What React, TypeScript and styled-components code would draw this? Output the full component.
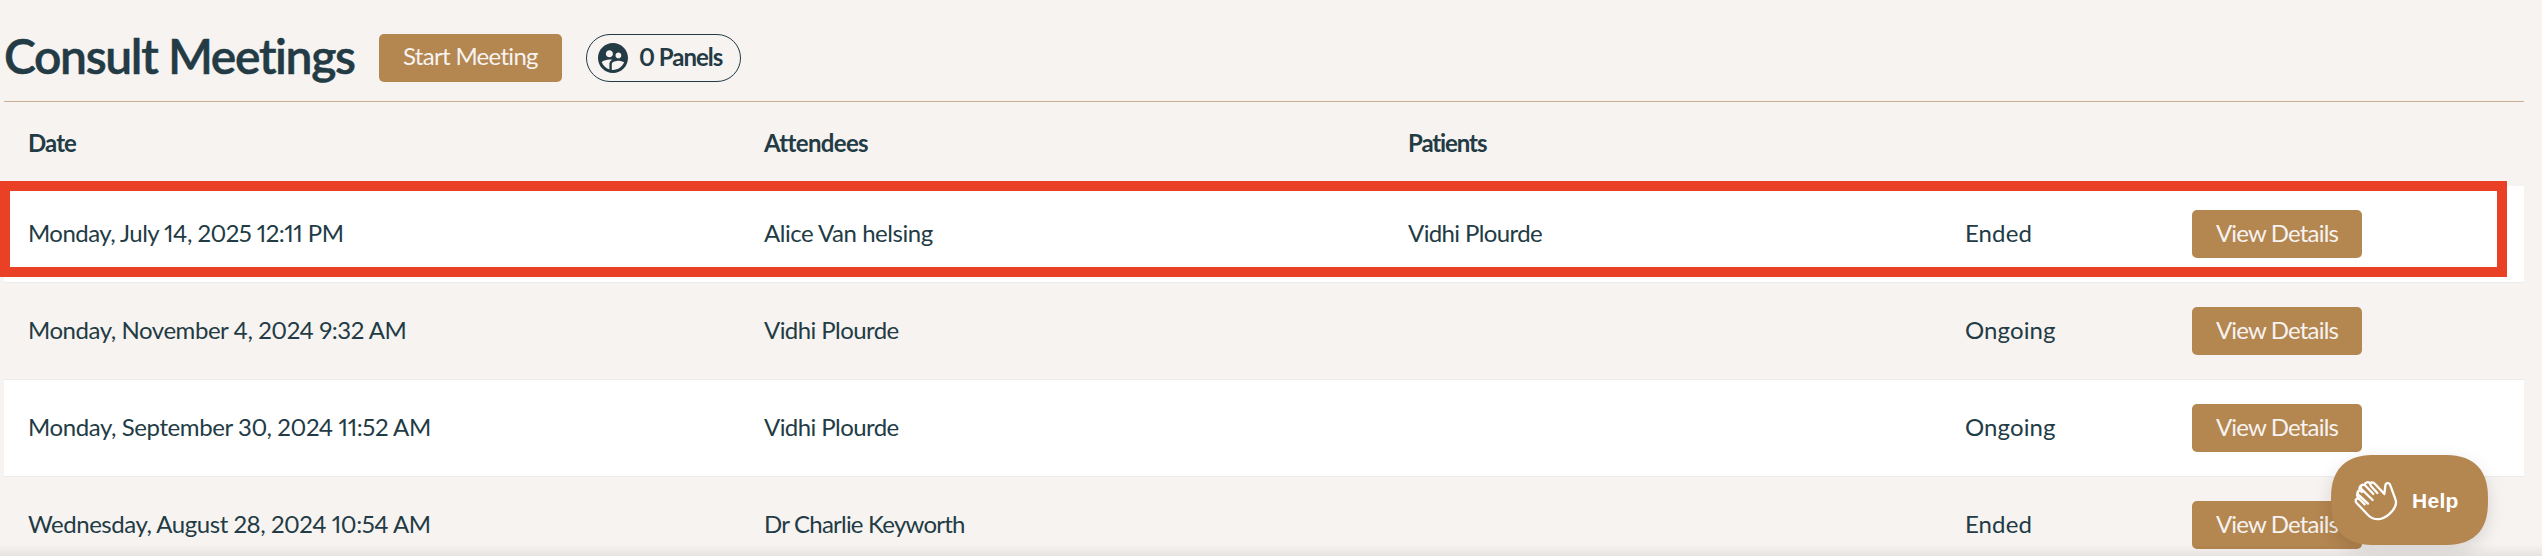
import React from "react";
import styled, { createGlobalStyle } from "styled-components";
import { MdSupervisedUserCircle } from "react-icons/md";

const colors = {
  page: "#f7f3f0",
  ink: "#223b45",
  gold: "#b48650",
  rule: "#c9b094",
  highlight: "#ea4026",
};

const GlobalStyle = createGlobalStyle`
  * { box-sizing: border-box; }
  html, body { margin: 0; background: ${colors.page}; }
  body {
    height: 556px;
    overflow: hidden;
    color: ${colors.ink};
    font-family: Lato, "Open Sans", sans-serif;
    font-size: 24px;
    font-variant-ligatures: none;
    font-variant-numeric: proportional-nums;
  }
`;

const Page = styled.main`
  position: relative;
  height: 556px;
  overflow: hidden;
  padding: 0 18px 0 4px;
`;

const Header = styled.header`
  display: flex;
  align-items: center;
  height: 102px;
  padding-top: 14px;
  border-bottom: 1px solid ${colors.rule};
`;

const Title = styled.h1`
  width: 375px;
  margin: 0;
  padding-bottom: 4px;
  font-size: 48px;
  font-weight: 600;
  line-height: 58px;
  letter-spacing: -1.35px;
  -webkit-text-stroke: 0.5px ${colors.ink};
  white-space: nowrap;
`;

const Button = styled.button<{ $width: number; $tracking: number }>`
  display: flex;
  align-items: center;
  justify-content: center;
  width: ${(p) => p.$width}px;
  height: 48px;
  padding: 0 0 4px;
  border: 0;
  border-radius: 5px;
  background: ${colors.gold};
  color: ${colors.page};
  font: inherit;
  font-variant-ligatures: none;
  letter-spacing: ${(p) => p.$tracking}px;
  white-space: nowrap;
`;

const PanelsPill = styled.div`
  display: flex;
  align-items: center;
  width: 155px;
  height: 48px;
  margin-left: 24px;
  padding-left: 8px;
  border: 1px solid ${colors.ink};
  border-radius: 24px;
`;

const PillLabel = styled.span`
  margin-left: 8px;
  padding-bottom: 3px;
  font-weight: 700;
  letter-spacing: -1px;
`;

const Row = styled.div<{ $striped?: boolean }>`
  display: grid;
  grid-template-columns: 736px 644px 557px 1fr;
  align-items: center;
  height: 97px;
  padding-left: 24px;
  border-bottom: 1px solid #ececec;
  background: ${(p) => (p.$striped ? "#ffffff" : "transparent")};
`;

const HeadRow = styled(Row)`
  height: 84px;
  padding-top: 1px;
  border-bottom: 0;
  font-weight: 700;
`;

const Cell = styled.div<{ $tracking?: number }>`
  padding-bottom: 4px;
  letter-spacing: ${(p) => p.$tracking ?? 0}px;
  white-space: nowrap;
`;

const Actions = styled.div`
  display: grid;
  grid-template-columns: 227px auto;
  align-items: center;
`;

const HighlightFrame = styled.div`
  position: absolute;
  top: 181px;
  left: 0;
  width: 2507px;
  height: 96px;
  border: 10px solid ${colors.highlight};
  pointer-events: none;
`;

const BottomFade = styled.div`
  position: absolute;
  right: 0;
  bottom: 0;
  left: 0;
  height: 12px;
  background: linear-gradient(to bottom, transparent, rgba(0, 0, 0, 0.065));
`;

const HelpButton = styled.button`
  position: absolute;
  top: 455px;
  left: 2331px;
  display: flex;
  align-items: center;
  width: 157px;
  height: 90px;
  padding: 0 0 0 19px;
  border: 0;
  border-radius: 45px;
  corner-shape: superellipse(1.35);
  background: ${colors.gold};
  box-shadow: 0 6px 18px rgba(0, 0, 0, 0.13);
  color: #ffffff;
  font: 700 21px "Liberation Sans", Arial, sans-serif;
  letter-spacing: 0.3px;
`;

const HelpLabel = styled.span`
  margin-left: 10px;
  padding-top: 2px;
`;

const HandIcon = () => (
  <svg width="52" height="52" viewBox="0 0 156 156" fill="none" stroke="#fff" strokeWidth="6.8" strokeLinecap="round" strokeLinejoin="round">
    <path d="M44 91 L28 75 C20 70 14 78 19 86 L54 123 C66 135 78 137 91 135 C105 132 117 123 126 112 C138 99 141 88 136 75 L121 34 C118 25 107 25 106 35 L103 60 L76 31 C69 22 57 23 62 35 L82 57" />
    <path d="M54 89 L24 61 C20 52 28 46 36 54" />
    <path d="M28 75 L23 68 C20 64 21 60 24 57" />
    <path d="M68 78 L36 47 C28 38 34 28 45 34 L70 60" />
    <path d="M31 51 C26 44 28 37 35 34 M44 33 C45 24 55 22 62 29" />
  </svg>
);

const meetings = [
  { date: "Monday, July 14, 2025 12:11 PM", attendee: "Alice Van helsing", patient: "Vidhi Plourde", status: "Ended", dateTracking: -0.54, nameTracking: -0.46 },
  { date: "Monday, November 4, 2024 9:32 AM", attendee: "Vidhi Plourde", patient: "", status: "Ongoing", dateTracking: -0.45, nameTracking: -0.57 },
  { date: "Monday, September 30, 2024 11:52 AM", attendee: "Vidhi Plourde", patient: "", status: "Ongoing", dateTracking: -0.41, nameTracking: -0.57 },
  { date: "Wednesday, August 28, 2024 10:54 AM", attendee: "Dr Charlie Keyworth", patient: "", status: "Ended", dateTracking: -0.46, nameTracking: -0.78 },
];

export default function App() {
  return (
    <Page>
      <GlobalStyle />
      <Header>
        <Title>Consult Meetings</Title>
        <Button $width={183} $tracking={-0.7}>Start Meeting</Button>
        <PanelsPill>
          <MdSupervisedUserCircle size={36} />
          <PillLabel>0 Panels</PillLabel>
        </PanelsPill>
      </Header>
      <HeadRow>
        <Cell $tracking={-0.9}>Date</Cell>
        <Cell $tracking={-0.65}>Attendees</Cell>
        <Cell $tracking={-1.1}>Patients</Cell>
      </HeadRow>
      {meetings.map((m, i) => (
        <Row key={m.date} $striped={i % 2 === 0}>
          <Cell $tracking={m.dateTracking}>{m.date}</Cell>
          <Cell $tracking={m.nameTracking}>{m.attendee}</Cell>
          <Cell $tracking={-0.62}>{m.patient}</Cell>
          <Actions>
            <Cell $tracking={0.1}>{m.status}</Cell>
            <Button $width={170} $tracking={-0.83}>View Details</Button>
          </Actions>
        </Row>
      ))}
      <HighlightFrame />
      <BottomFade />
      <HelpButton>
        <HandIcon />
        <HelpLabel>Help</HelpLabel>
      </HelpButton>
    </Page>
  );
}
